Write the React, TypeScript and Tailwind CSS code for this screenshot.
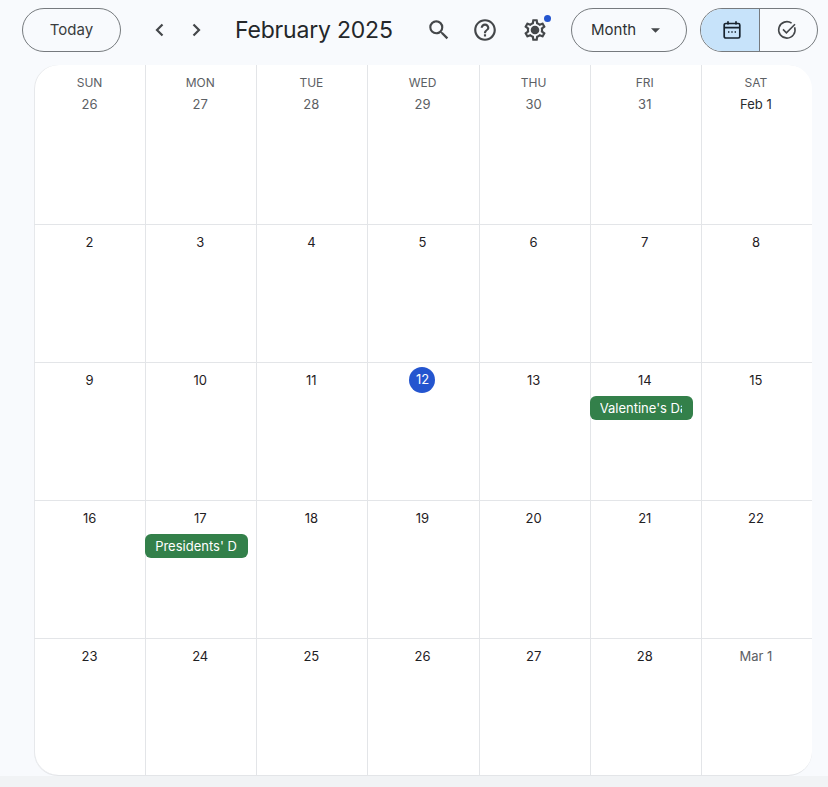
import React from 'react';

const weekdays = ['SUN', 'MON', 'TUE', 'WED', 'THU', 'FRI', 'SAT'];

const days = [
  '26', '27', '28', '29', '30', '31', 'Feb 1',
  '2', '3', '4', '5', '6', '7', '8',
  '9', '10', '11', '12', '13', '14', '15',
  '16', '17', '18', '19', '20', '21', '22',
  '23', '24', '25', '26', '27', '28', 'Mar 1',
];

const events: Record<number, string> = {
  19: "Valentine's Day",
  22: "Presidents' Day",
};

function dayColor(index: number) {
  if (index < 6) return 'text-[#5c6064]';
  if (index === 6) return 'text-[#2a2d30]';
  if (index === 34) return 'text-[#5c6064]';
  return 'text-[#1f2124]';
}

function Chevron({ dir }: { dir: 'left' | 'right' }) {
  return (
    <svg width="24" height="24" viewBox="0 0 24 24" fill="none" stroke="#44474a" strokeWidth="2.2">
      <path d={dir === 'left' ? 'M14.5 6.5 9 12l5.5 5.5' : 'M9.5 6.5 15 12l-5.5 5.5'} />
    </svg>
  );
}

function Toolbar() {
  return (
    <div className="flex items-center h-[59px] pl-[22px] pt-[1px] text-[#1f2124]">
      <button className="w-[99px] h-[44px] rounded-full border border-[#767a7e] text-[15px] text-[#3a3d40]">
        Today
      </button>
      <div className="flex ml-[27px] gap-[12px]">
        <Chevron dir="left" />
        <Chevron dir="right" />
      </div>
      <div className="ml-[27px] w-[175px] text-[23px] leading-[30px] tracking-[-0.2px] text-[#24272a]">February 2025</div>
      <svg className="ml-[16px]" width="26" height="26" viewBox="0 0 24 24" fill="#44474a">
        <path d="M15.5 14h-.79l-.28-.27A6.47 6.47 0 0 0 16 9.5 6.5 6.5 0 1 0 9.5 16c1.61 0 3.09-.59 4.23-1.57l.27.28v.79l5 4.99L20.49 19l-4.99-5zm-6 0C7.01 14 5 11.99 5 9.5S7.01 5 9.5 5 14 7.01 14 9.5 11.99 14 9.5 14z" />
      </svg>
      <svg className="ml-[20px]" width="26" height="26" viewBox="0 0 24 24" fill="#44474a">
        <path d="M11 18h2v-2h-2v2zm1-16C6.48 2 2 6.48 2 12s4.48 10 10 10 10-4.48 10-10S17.52 2 12 2zm0 18c-4.41 0-8-3.59-8-8s3.59-8 8-8 8 3.59 8 8-3.59 8-8 8zm0-14c-2.21 0-4 1.79-4 4h2c0-1.1.9-2 2-2s2 .9 2 2c0 2-3 1.75-3 5h2c0-2.25 3-2.5 3-5 0-2.21-1.79-4-4-4z" />
      </svg>
      <div className="relative ml-[24px] w-[26px] h-[26px]">
        <svg width="26" height="26" viewBox="0 0 24 24" fill="#44474a">
          <path d="M19.43 12.98c.04-.32.07-.64.07-.98 0-.34-.03-.66-.07-.98l2.11-1.65c.19-.15.24-.42.12-.64l-2-3.46c-.09-.16-.26-.25-.44-.25-.06 0-.12.01-.17.03l-2.49 1c-.52-.4-1.08-.73-1.69-.98l-.38-2.65C14.46 2.18 14.25 2 14 2h-4c-.25 0-.46.18-.49.42l-.38 2.65c-.61.25-1.17.59-1.69.98l-2.49-1c-.06-.02-.12-.03-.18-.03-.17 0-.34.09-.43.25l-2 3.46c-.13.22-.07.49.12.64l2.11 1.65c-.04.32-.07.65-.07.98 0 .33.03.66.07.98l-2.11 1.65c-.19.15-.24.42-.12.64l2 3.46c.09.16.26.25.44.25.06 0 .12-.01.17-.03l2.49-1c.52.4 1.08.73 1.69.98l.38 2.65c.03.24.24.42.49.42h4c.25 0 .46-.18.49-.42l.38-2.65c.61-.25 1.17-.59 1.69-.98l2.49 1c.06.02.12.03.18.03.17 0 .34-.09.43-.25l2-3.46c.12-.22.07-.49-.12-.64l-2.11-1.65zm-1.98-1.71c.04.31.05.52.05.73 0 .21-.02.43-.05.73l-.14 1.13.89.7 1.08.84-.7 1.21-1.27-.51-1.04-.42-.9.68c-.43.32-.84.56-1.25.73l-1.06.43-.16 1.13-.2 1.35h-1.4l-.19-1.35-.16-1.13-1.06-.43c-.43-.18-.83-.41-1.23-.71l-.91-.7-1.06.43-1.27.51-.7-1.21 1.08-.84.89-.7-.14-1.13c-.03-.31-.05-.54-.05-.74s.02-.43.05-.73l.14-1.13-.89-.7-1.08-.84.7-1.21 1.27.51 1.04.42.9-.68c.43-.32.84-.56 1.25-.73l1.06-.43.16-1.13.2-1.35h1.39l.19 1.35.16 1.13 1.06.43c.43.18.83.41 1.23.71l.91.7 1.06-.43 1.27-.51.7 1.21-1.07.85-.89.7.14 1.13zM12 8c-2.21 0-4 1.79-4 4s1.79 4 4 4 4-1.79 4-4-1.79-4-4-4z" />
        </svg>
        <span className="absolute top-[-2px] right-[-3px] w-[7px] h-[7px] rounded-full bg-[#2455cf]" />
      </div>
      <button className="ml-[23px] w-[116px] h-[44px] rounded-full border border-[#767a7e] flex items-center pl-[19px] text-[15px] text-[#2e3134]">
        Month
        <svg className="ml-[15px]" width="9" height="5" viewBox="0 0 10 5" fill="#44474a">
          <path d="M0 0h10L5 5z" />
        </svg>
      </button>
      <div className="ml-[13px] w-[118px] h-[44px] rounded-full border border-[#767a7e] flex overflow-hidden">
        <div className="w-[59px] pl-[3px] bg-[#c7e3fa] border-r border-[#767a7e] flex items-center justify-center">
          <svg width="20" height="20" viewBox="0 0 20 20" fill="none" stroke="#17232e" strokeWidth="1.7">
            <rect x="2.2" y="3.5" width="15.6" height="14.5" rx="1.6" />
            <path d="M2.2 7.6h15.6M6 1.2v3.4M14 1.2v3.4" />
            <path d="M6 12h1.4M9.3 12h1.4M12.6 12H14" strokeWidth="1.5" />
          </svg>
        </div>
        <div className="flex-1 pr-[4px] flex items-center justify-center">
          <svg width="22" height="22" viewBox="0 0 22 22" fill="none" stroke="#44474a" strokeWidth="1.6">
            <path d="M18.6 8.2A8.2 8.2 0 1 1 15.6 4.2" />
            <path d="M7 10.4l3.4 3.4L19 5.2" />
          </svg>
        </div>
      </div>
    </div>
  );
}

function DayCell({ label, index }: { label: string; index: number }) {
  const isToday = index === 17;
  const isFirstRow = index < 7;
  const event = events[index];
  // inner columns center a little left of the cell, the left border pushes them over
  const nudge = index % 7 === 0 ? '' : 'pr-[2px]';

  return (
    <div
      className={`relative min-w-0 ${index % 7 === 0 ? '' : 'border-l border-[#e3e5e8]'} ${
        index < 28 ? 'border-b border-[#e3e5e8]' : ''
      } ${isFirstRow ? 'pt-[9px]' : 'pt-[4px]'}`}
    >
      {isFirstRow && (
        <div className={`text-center text-[12px] leading-[18px] text-[#5c6064] ${nudge}`}>
          {weekdays[index]}
        </div>
      )}
      <div className={`flex justify-center ${nudge}`}>
        {isToday ? (
          <span className="w-[26px] h-[26px] rounded-full bg-[#2455cf] text-white flex items-center justify-center text-[13px]">
            {label}
          </span>
        ) : (
          <span className={`flex items-center text-[13px] ${isFirstRow ? 'h-[20px] mt-[3px]' : 'h-[26px] pt-[2px]'} ${dayColor(index)}`}>
            {label}
          </span>
        )}
      </div>
      {event && (
        <div className="mt-[3px] -ml-[1px] mr-[8px] h-[24px] rounded-[6px] bg-[#33804a] text-white text-[13px] leading-[24px] pl-[10px] pr-[11px]">
          <div className="overflow-hidden whitespace-nowrap">{event}</div>
        </div>
      )}
    </div>
  );
}

export default function App() {
  return (
    <div className="relative w-[828px] h-[787px] overflow-hidden bg-[#f8fafd] font-['Inter',sans-serif]">
      <Toolbar />
      <div className="ml-[34px] mt-[6px] w-[778px] h-[711px] rounded-[24px] bg-white overflow-hidden shadow-[inset_1px_0_0_#e6e8eb] grid grid-cols-7 grid-rows-[160px_138px_138px_138px_1fr] border-b border-[#e3e5e8]">
        {days.map((label, index) => (
          <DayCell key={index} label={label} index={index} />
        ))}
      </div>
      <div className="absolute left-0 right-0 bottom-0 h-[11px] bg-[#f1f3f5]" />
    </div>
  );
}
